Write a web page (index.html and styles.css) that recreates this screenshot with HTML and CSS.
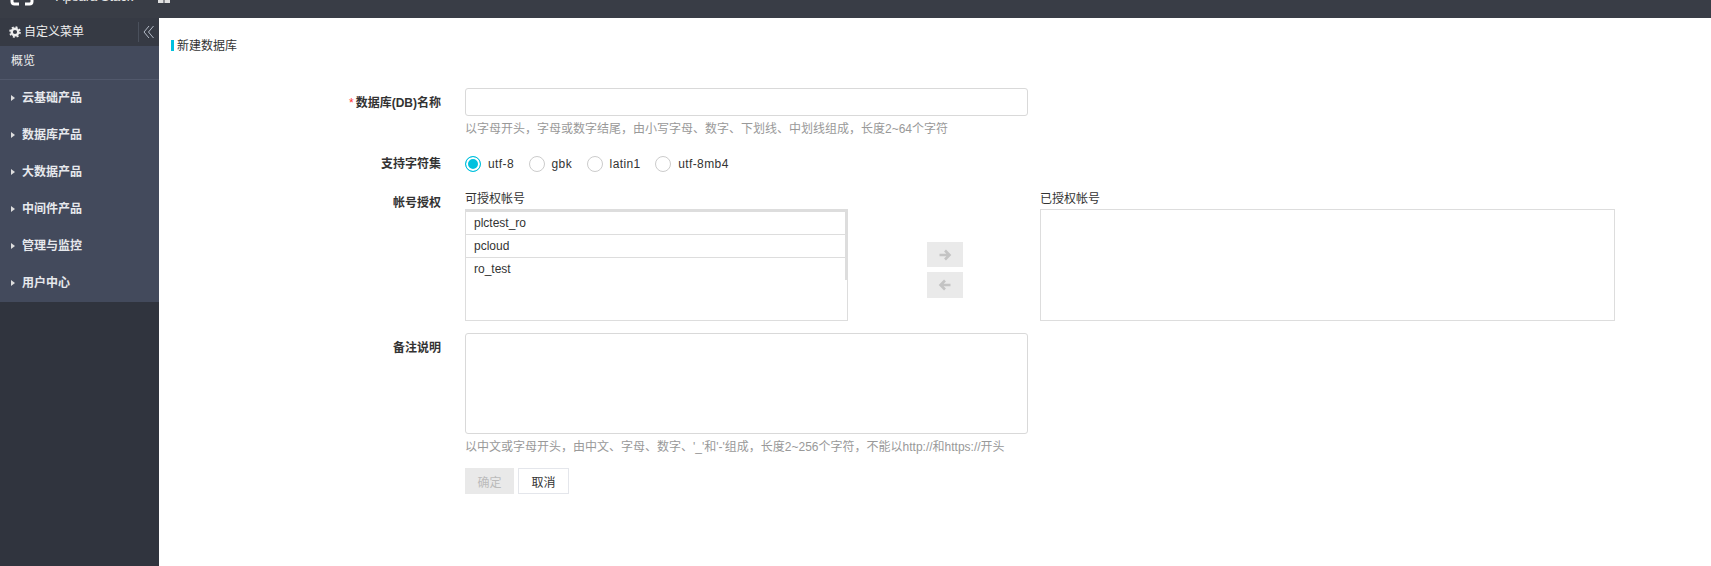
FILE: index.html
```html
<!DOCTYPE html>
<html lang="zh">
<head>
<meta charset="utf-8">
<title>新建数据库</title>
<link rel="stylesheet" href="styles.css">
</head>
<body>
<header class="topbar">
  <svg class="logo" width="24" height="18" viewBox="0 0 24 18"><path d="M9 4H4.500Q2 4 2 1.500V-6M15 4h4.500Q22 4 22 1.500V-6" fill="none" stroke="#fff" stroke-width="3"/></svg>
  <span class="brand">Apsara Stack</span>
  <svg class="grid" width="12" height="18" viewBox="0 0 12 18"><path d="M0 -4h5.500v7H0zM6.500 -4H12v7H6.500z" fill="#e0e0e0"/></svg>
</header>
<div class="shell">
  <aside class="sidebar">
    <div class="custom">
      <span class="custom-title"><svg class="gear" width="12" height="12" viewBox="0 0 12 12"><circle cx="6" cy="6" r="3.300" fill="none" stroke="#eee" stroke-width="2.400"/><circle cx="6" cy="6" r="5" fill="none" stroke="#eee" stroke-width="1.600" stroke-dasharray="2 1.930"/></svg>自定义菜单</span>
      <span class="collapse"><svg width="11" height="14" viewBox="0 0 11 14"><path d="M6 1 1 7l5 6M10.500 1l-5 6 5 6" fill="none" stroke="#b5bcc8" stroke-width="1"/></svg></span>
    </div>
    <div class="overview">概览</div>
    <nav class="nav">
      <div class="nav-item">云基础产品</div>
      <div class="nav-item">数据库产品</div>
      <div class="nav-item">大数据产品</div>
      <div class="nav-item">中间件产品</div>
      <div class="nav-item">管理与监控</div>
      <div class="nav-item">用户中心</div>
    </nav>
  </aside>
  <main class="main">
    <h1 class="title">新建数据库</h1>
    <form class="form">
      <div class="row row-name">
        <label class="label"><span class="req">*</span>数据库(DB)名称</label>
        <div class="field">
          <input class="input" type="text">
          <p class="help">以字母开头，字母或数字结尾，由小写字母、数字、下划线、中划线组成，长度2~64个字符</p>
        </div>
      </div>
      <div class="row row-charset">
        <label class="label">支持字符集</label>
        <div class="radios">
          <span class="radio"><i class="dot on"></i>utf-8</span>
          <span class="radio"><i class="dot"></i>gbk</span>
          <span class="radio"><i class="dot"></i>latin1</span>
          <span class="radio"><i class="dot"></i>utf-8mb4</span>
        </div>
      </div>
      <div class="row row-account">
        <label class="label">帐号授权</label>
        <div class="transfer">
          <div class="pane pane-left">
            <div class="pane-title">可授权帐号</div>
            <div class="list">
              <div class="list-scroll">
                <div class="list-item">plctest_ro</div>
                <div class="list-item">pcloud</div>
                <div class="list-item last">ro_test</div>
              </div>
            </div>
          </div>
          <div class="arrows">
            <span class="arrow"><svg width="14" height="12" viewBox="0 0 14 12"><path d="M1.500 6h10M7 1.500 11.500 6 7 10.500" fill="none" stroke="#c4c4c4" stroke-width="2.600"/></svg></span>
            <span class="arrow arrow-back"><svg width="14" height="12" viewBox="0 0 14 12"><path d="M12.500 6h-10M7 1.500 2.500 6 7 10.500" fill="none" stroke="#c4c4c4" stroke-width="2.600"/></svg></span>
          </div>
          <div class="pane pane-right">
            <div class="pane-title">已授权帐号</div>
            <div class="list"></div>
          </div>
        </div>
      </div>
      <div class="row row-note">
        <label class="label">备注说明</label>
        <div class="field">
          <textarea class="textarea"></textarea>
          <p class="help help-note">以中文或字母开头，由中文、字母、数字、'_'和'-'组成，长度2~256个字符，不能以http://和https://开头</p>
        </div>
      </div>
      <div class="actions">
        <button type="button" class="btn btn-ok">确定</button>
        <button type="button" class="btn btn-cancel">取消</button>
      </div>
    </form>
  </main>
</div>
</body>
</html>
```
FILE: styles.css
```css
* { box-sizing: border-box; }
html, body { margin: 0; height: 100%; }
body {
  font-family: "Liberation Sans", "Noto Sans CJK SC", sans-serif;
  font-size: 12px;
  color: #333;
  background: #fff;
  overflow: hidden;
}
.topbar {
  height: 18px;
  background: #393d46;
  display: flex;
  overflow: hidden;
}
.logo { margin-left: 10px; flex: none; }
.brand {
  margin-left: 22px;
  width: 102px;
  color: #e8e8e8;
  font-size: 13px;
  line-height: 14px;
  margin-top: -10px;
  white-space: nowrap;
}
.grid { flex: none; }
.sidebar {
  width: 159px;
  background: #30343e;
  flex: none;
}
.shell { display: flex; height: 548px; }
.custom {
  height: 28px;
  background: #363a44;
  display: flex;
  align-items: center;
  justify-content: space-between;
  color: #eee;
  padding-left: 9px;
}
.custom-title { display: flex; align-items: center; gap: 3px; line-height: 26px; }
.gear { flex: none; }
.collapse {
  width: 21px;
  height: 20px;
  border-left: 1px solid #4a505c;
  display: flex;
  align-items: center;
  justify-content: flex-end;
  padding-right: 5px;
}
.overview {
  height: 34px;
  background: #434a5c;
  border-bottom: 1px solid #51586b;
  color: #eee;
  padding-left: 11px;
  line-height: 31px;
}
.nav { background: #434a5c; }
.nav-item {
  height: 37px;
  line-height: 37px;
  color: #e6e8ec;
  font-weight: bold;
  padding-left: 22px;
  position: relative;
}
.nav-item::before {
  content: "";
  position: absolute;
  left: 11px;
  top: 15px;
  border-left: 4px solid #ddd;
  border-top: 3.500px solid transparent;
  border-bottom: 3.500px solid transparent;
}
.main { flex: 1; min-width: 0; padding: 22px 0 0 12px; }
.title {
  margin: 0;
  font-size: 12px;
  font-weight: normal;
  line-height: 12px;
  height: 11px;
  border-left: 3px solid #00c1de;
  padding-left: 3px;
}
.form { margin-top: 37px; }
.row { display: flex; align-items: flex-start; }
.label {
  width: 282px;
  margin-right: 24px;
  margin-left: -12px;
  flex: none;
  text-align: right;
  font-weight: bold;
  color: #333;
  line-height: 30px;
}
.req { color: #f33; font-weight: normal; margin-right: 2px; }
.field { width: 563px; }
.input {
  display: block;
  width: 100%;
  height: 28px;
  border: 1px solid #d9d9d9;
  border-radius: 3px;
  background: #fff;
}
.help { margin: 4px 0 0; color: #999; line-height: 18px; white-space: nowrap; }
.row-charset { margin-top: 12px; height: 28px; align-items: center; }
.row-charset .label { line-height: 28px; }
.radios { display: flex; align-items: center; height: 28px; }
.radio { display: flex; align-items: center; margin-right: 14.500px; color: #333; letter-spacing: 0.400px; }
.dot {
  width: 16px;
  height: 16px;
  border-radius: 50%;
  border: 1px solid #ccc;
  margin-right: 7px;
  background: #fff;
}
.dot.on { border-color: #00c1de; box-shadow: inset 0 0 0 2px #fff; background: #00c1de; }
.row-account { margin-top: 15px; }
.row-account .label { line-height: 20px; }
.transfer { display: flex; }
.pane-title { line-height: 13px; height: 16px; }
.pane-left { width: 383px; }
.pane-right { width: 575px; }
.list { height: 112px; border: 1px solid #ddd; }
.list-scroll { height: 70px; border-top: 2px solid #ddd; border-right: 2px solid #ddd; }
.list-item {
  height: 23px;
  line-height: 22px;
  padding-left: 8px;
  border-bottom: 1px solid #ddd;
}
.list-item.last { border-bottom: 0; }
.arrows {
  width: 192px;
  padding: 49px 0 0 79px;
  display: flex;
  flex-direction: column;
  gap: 5px;
}
.arrow {
  width: 36px;
  height: 25px;
  background: #eaeaea;
  display: flex;
  align-items: center;
  justify-content: center;
}
.arrow-back { height: 26px; }
.row-note { margin-top: 12px; }
.textarea {
  display: block;
  width: 100%;
  height: 101px;
  border: 1px solid #d9d9d9;
  border-radius: 3px;
  resize: none;
  background: #fff;
}
.actions { display: flex; gap: 4px; margin: 12px 0 0 294px; }
.btn {
  height: 26px;
  font: inherit;
  padding: 0;
}
.btn-ok { width: 49px; background: #e9e9e9; border: 0; color: #bbb; }
.btn-cancel { width: 51px; background: #fff; border: 1px solid #e4e6eb; color: #333; }
```
